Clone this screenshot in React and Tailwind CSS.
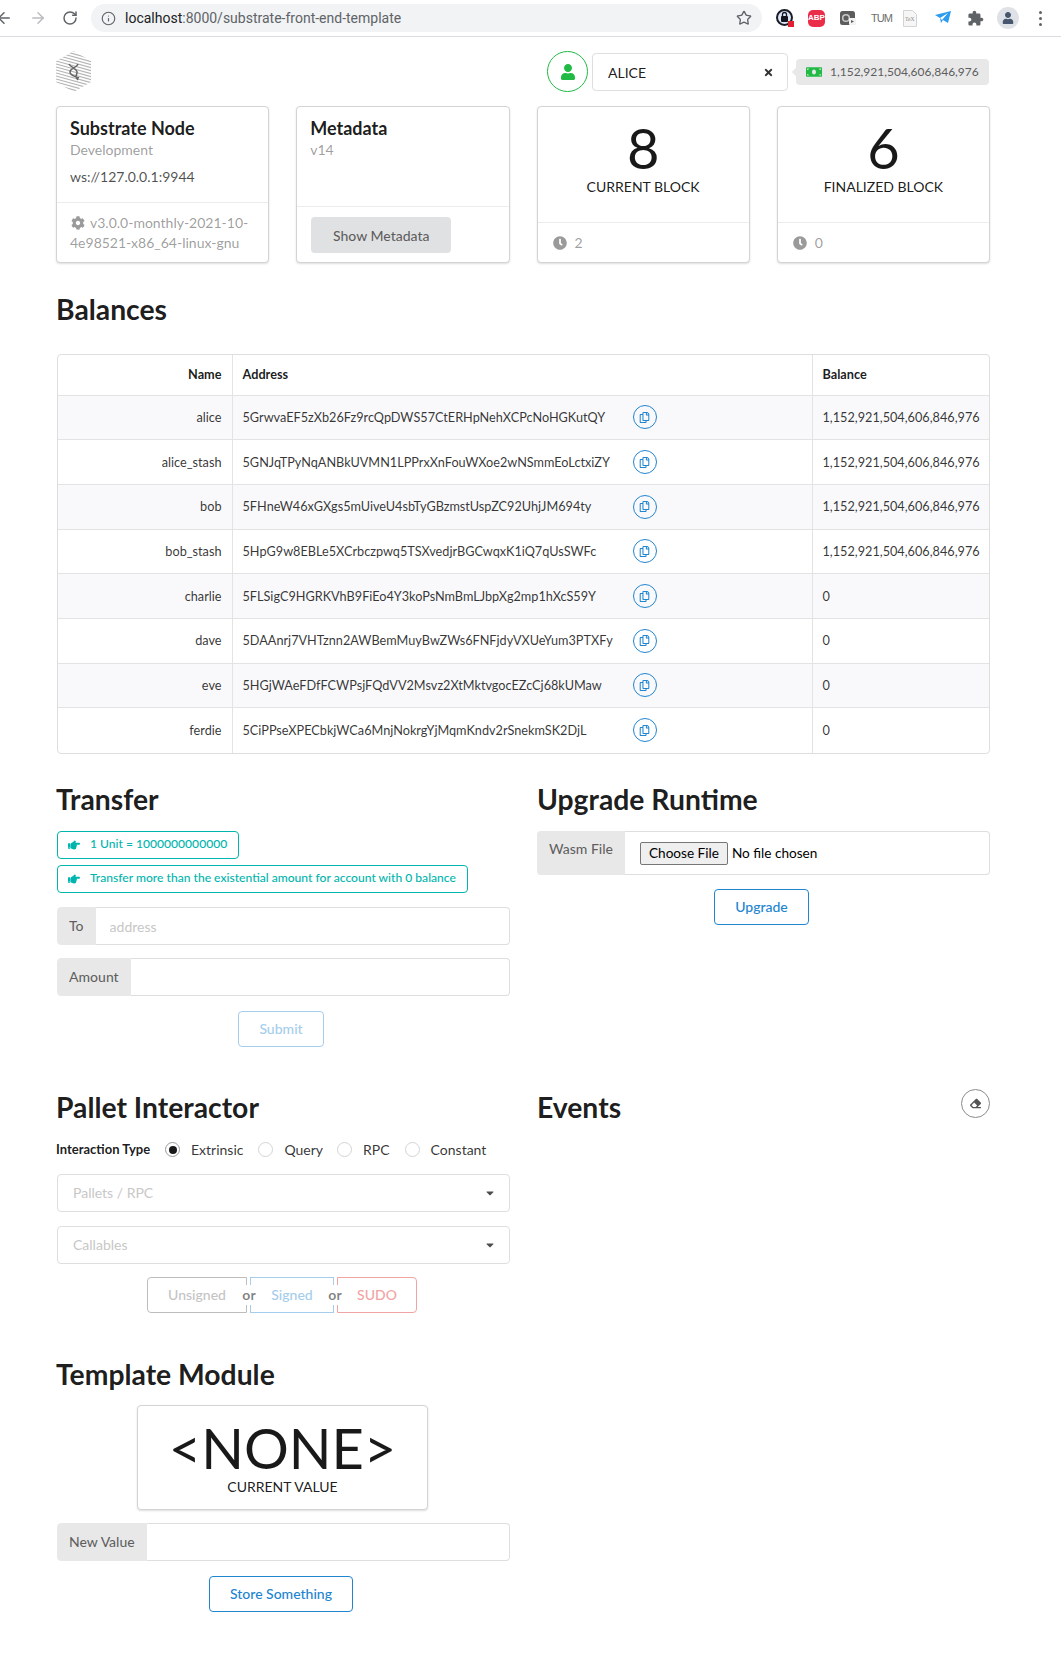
import { ArrowLeft, ArrowRight, RotateCw, Info, Star } from 'lucide-react'
import {
  FaCaretDown,
  FaClock,
  FaCog,
  FaEraser,
  FaHandPointRight,
  FaMoneyBill,
  FaRegCopy,
  FaTimes,
  FaUser,
} from 'react-icons/fa'

const accounts = [
  ['alice', '5GrwvaEF5zXb26Fz9rcQpDWS57CtERHpNehXCPcNoHGKutQY', '1,152,921,504,606,846,976'],
  ['alice_stash', '5GNJqTPyNqANBkUVMN1LPPrxXnFouWXoe2wNSmmEoLctxiZY', '1,152,921,504,606,846,976'],
  ['bob', '5FHneW46xGXgs5mUiveU4sbTyGBzmstUspZC92UhjJM694ty', '1,152,921,504,606,846,976'],
  ['bob_stash', '5HpG9w8EBLe5XCrbczpwq5TSXvedjrBGCwqxK1iQ7qUsSWFc', '1,152,921,504,606,846,976'],
  ['charlie', '5FLSigC9HGRKVhB9FiEo4Y3koPsNmBmLJbpXg2mp1hXcS59Y', '0'],
  ['dave', '5DAAnrj7VHTznn2AWBemMuyBwZWs6FNFjdyVXUeYum3PTXFy', '0'],
  ['eve', '5HGjWAeFDfFCWPsjFQdVV2Msvz2XtMktvgocEZcCj68kUMaw', '0'],
  ['ferdie', '5CiPPseXPECbkjWCa6MnjNokrgYjMqmKndv2rSnekmSK2DjL', '0'],
]

function BrowserBar() {
  return (
    <div className="h-[37px] border-b border-[#dadce0] flex items-center relative">
      <ArrowLeft size={18} strokeWidth={2} className="text-[#5f6368] ml-[-5px]" />
      <ArrowRight size={18} strokeWidth={2} className="text-[#babcbe] ml-[16px]" />
      <RotateCw size={16} strokeWidth={2.2} className="text-[#5f6368] ml-[15px]" />
      <div className="ml-[13px] w-[671px] h-[28px] bg-[#f1f3f4] rounded-full flex items-center pl-[10px] pr-[11px] text-[#5f6368]">
        <Info size={15} strokeWidth={1.8} />
        <span className="ml-[9px] text-[14px] font-['Roboto',sans-serif]">
          <span className="text-[#202124]">localhost</span>:8000/substrate-front-end-template
        </span>
        <Star size={16} strokeWidth={2} className="ml-auto mr-[-1px] text-[#5f6368]" />
      </div>
      <div className="ml-[14px] flex items-center">
        <svg width="18" height="18" viewBox="0 0 18 18">
          <circle cx="8.5" cy="8.5" r="7.5" fill="#dbe6f7" stroke="#1c1c28" strokeWidth="2" />
          <rect x="5" y="7" width="7" height="6" rx="1" fill="#15151f" />
          <path d="M6.5 7V5.5a2 2 0 0 1 4 0V7" fill="none" stroke="#15151f" strokeWidth="1.3" />
          <rect x="12" y="12" width="6" height="6" fill="#e0202f" />
        </svg>
        <div className="ml-[14px] w-[17px] h-[17px] bg-[#ea2d49] text-white text-[8px] font-bold flex items-center justify-center rounded-[5px] font-['Liberation_Sans',sans-serif]">
          ABP
        </div>
        <svg className="ml-[15px]" width="16" height="16" viewBox="0 0 16 16">
          <rect width="15" height="14" y="1" rx="2.5" fill="#5c5c5c" />
          <circle cx="6" cy="8" r="3.3" fill="none" stroke="#c9c9c9" strokeWidth="1.5" />
          <rect x="9" y="8" width="7" height="7" rx="1" fill="#f2f2f2" />
          <path d="M11 10l3 1.5-3 1.5z" fill="#5c5c5c" />
        </svg>
        <span className="ml-[15px] w-[17px] text-[11px] tracking-[-1px] text-[#6d6d6d] font-['Liberation_Sans',sans-serif]">
          TUM
        </span>
        <svg className="ml-[15px]" width="14" height="17" viewBox="0 0 14 17">
          <path d="M.5.5h9l4 4v12H.5z" fill="#f6f6f6" stroke="#d4d4d4" />
          <text x="2" y="11" fontSize="5.5" fill="#8a8a8a" fontFamily="Liberation Serif, serif">TeX</text>
        </svg>
        <svg className="ml-[18px]" width="16" height="14" viewBox="0 0 16 14">
          <path d="M0 4l16-4-3 12-5-3-2 3-1-5z" fill="#2d9cef" />
          <path d="M5 7l8-5-6 7" fill="#fff" />
        </svg>
        <svg className="ml-[16px]" width="17" height="17" viewBox="0 0 24 24" fill="#5f6368">
          <path d="M20.5 11H19V7c0-1.1-.9-2-2-2h-4V3.5C13 2.12 11.88 1 10.5 1S8 2.12 8 3.5V5H4c-1.1 0-1.99.9-1.99 2v3.8H3.5c1.49 0 2.7 1.21 2.7 2.7s-1.21 2.7-2.7 2.7H2V20c0 1.1.9 2 2 2h3.8v-1.5c0-1.49 1.21-2.7 2.7-2.7 1.49 0 2.7 1.21 2.7 2.7V22H17c1.1 0 2-.9 2-2v-4h1.5c1.38 0 2.5-1.12 2.5-2.5S21.88 11 20.5 11z" />
        </svg>
        <div className="ml-[13px] w-[22px] h-[22px] rounded-full bg-[#dee1e6] flex items-center justify-center">
          <FaUser size={12} className="text-[#47566f]" />
        </div>
        <div className="ml-[20px] flex flex-col gap-[3px]">
          <span className="w-[3px] h-[3px] rounded-full bg-[#5f6368]" />
          <span className="w-[3px] h-[3px] rounded-full bg-[#5f6368]" />
          <span className="w-[3px] h-[3px] rounded-full bg-[#5f6368]" />
        </div>
      </div>
    </div>
  )
}

function Logo() {
  const lines = []
  for (let i = 0; i < 18; i++) {
    lines.push(
      <line key={i} x1="0" y1={i * 3 - 8} x2="36" y2={i * 3 + 2} stroke="#b4b4b4" strokeWidth="1.2" />
    )
  }
  return (
    <svg width="35" height="41" viewBox="0 0 35 41">
      <defs>
        <clipPath id="hexagon">
          <polygon points="17.5,0 35,10 35,31 17.5,41 0,31 0,10" />
        </clipPath>
      </defs>
      <g clipPath="url(#hexagon)">{lines}</g>
      <path d="M13 13c2 4 9 5 8 9s-2 3 1 7M22 13c-1 4-8 4-8 8s5 4 9 6" stroke="#666" strokeWidth="1.5" fill="none" />
    </svg>
  )
}

function Card({ className = '', children }) {
  return (
    <div className={`border border-[#d4d4d5] rounded-[4px] shadow-[0_1px_2px_rgba(34,36,38,0.15)] bg-white ${className}`}>
      {children}
    </div>
  )
}

function StatCard({ value, label, since }) {
  return (
    <Card className="h-[157px] flex flex-col">
      <div className="h-[115px] flex flex-col items-center pt-[13px]">
        <div className="text-[56px] leading-[56px]">{value}</div>
        <div className="text-[14px] leading-[20px] mt-[1px] uppercase">{label}</div>
      </div>
      <div className="flex-1 border-t border-[#ececed] flex items-center px-[15px] text-[14px] text-black/40">
        <FaClock size={14} className="text-[#9a9a9a]" />
        <span className="ml-[8px]">{since}</span>
      </div>
    </Card>
  )
}

function Heading({ children }) {
  return <h1 className="text-[28.3px] leading-[36px] font-bold">{children}</h1>
}

function LabeledInput({ label, placeholder, className = 'mt-[14px]' }) {
  return (
    <div className={`flex h-[38px] ${className}`}>
      <div className="bg-[#e8e8e8] text-black/60 font-medium text-[14px] pl-[11px] pr-[11px] flex items-center rounded-l-[4px] border border-[#e8e8e8]">
        {label}
      </div>
      <input
        placeholder={placeholder}
        className="flex-1 min-w-0 border border-l-0 border-[#dedede] rounded-r-[4px] px-[14px] text-[14px] placeholder:text-[#c7c7c7] pt-[2px]"
      />
    </div>
  )
}

function Note({ children }) {
  return (
    <div className="h-[28px] w-fit border border-[#00b5ad] rounded-[4px] flex items-center pl-[10px] pr-[11px] text-[#00b5ad] text-[12.1px] font-medium">
      <FaHandPointRight size={12} />
      <span className="ml-[10px]">{children}</span>
    </div>
  )
}

function OutlineButton({ children, className = '', disabled }) {
  return (
    <button
      className={`block h-[36px] border rounded-[4px] text-[14px] font-medium ${
        disabled
          ? 'border-[#a5cdec] text-[#a5cdec]'
          : 'border-[#2185d0] text-[#2185d0]'
      } ${className}`}
    >
      {children}
    </button>
  )
}

function Radio({ label, checked, className = '' }) {
  return (
    <div className={`flex items-center ${className}`}>
      <span
        className={`w-[15px] h-[15px] rounded-full border flex items-center justify-center ${
          checked ? 'border-[#9a9a9a]' : 'border-[#d4d4d5]'
        }`}
      >
        {checked && <span className="w-[8px] h-[8px] rounded-full bg-black/90" />}
      </span>
      <span className="ml-[11px] text-[14px] text-black/80">{label}</span>
    </div>
  )
}

function SelectBox({ placeholder, className = '' }) {
  return (
    <div className={`h-[38px] border border-[#dedede] rounded-[4px] flex items-center justify-between pl-[15px] pr-[13px] ${className}`}>
      <span className="text-[14px] text-[#c7c7c7]">{placeholder}</span>
      <FaCaretDown size={12} className="text-[#4d4d4d]" />
    </div>
  )
}

function Or({ className = '' }) {
  return (
    <span className={`absolute top-[8px] h-[20px] w-[16px] bg-white text-center text-[14px] leading-[20px] font-bold text-black/50 ${className}`}>
      or
    </span>
  )
}

export default function App() {
  return (
    <div className="min-h-[1663px] bg-white text-black/90 font-['Lato',sans-serif] text-[14px]">
      <BrowserBar />
      <div className="w-[934px] ml-[56px]">
        <div className="h-[41px] mt-[14px] flex items-center">
          <Logo />
          <div className="ml-[456px] w-[41px] h-[41px] rounded-full border border-[#21ba45] flex items-center justify-center">
            <FaUser size={16} className="text-[#21ba45]" />
          </div>
          <div className="ml-[4px] mt-[1px] w-[196px] h-[38px] border border-[#dedede] rounded-[4px] flex items-center justify-between pl-[15px] pr-[13px]">
            <span className="text-[14px] text-black/90">ALICE</span>
            <FaTimes size={11} className="text-[#333]" />
          </div>
          <div className="relative ml-[8px] w-[193px] h-[26px] bg-[#e8e8e8] rounded-[4px] flex items-center pl-[10px] text-[12px] text-black/60 font-medium">
            <span className="absolute left-[-3px] top-[10px] w-[6px] h-[6px] bg-[#e8e8e8] rotate-45" />
            <FaMoneyBill size={16} className="text-[#21ba45]" />
            <span className="ml-[8px]">1,152,921,504,606,846,976</span>
          </div>
        </div>

        <div className="grid grid-cols-4 gap-[27px] mt-[14px]">
          <Card className="h-[157px] flex flex-col">
            <div className="h-[95px] px-[13px] pt-[10px]">
              <div className="text-[18px] leading-[23px] font-bold">Substrate Node</div>
              <div className="text-[14px] leading-[20px] text-black/40">Development</div>
              <div className="text-[14px] leading-[20px] mt-[7px] text-black/70">ws://127.0.0.1:9944</div>
            </div>
            <div className="flex-1 border-t border-[#ececed] px-[13px] pt-[10px] text-[14px] leading-[20px] text-black/40">
              <FaCog size={14} className="inline mr-[5px] ml-[1px] align-[-2px] text-[#9a9a9a]" />
              v3.0.0-monthly-2021-10-4e98521-x86_64-linux-gnu
            </div>
          </Card>
          <Card className="h-[157px] flex flex-col">
            <div className="h-[99px] px-[13px] pt-[10px]">
              <div className="text-[18px] leading-[23px] font-bold">Metadata</div>
              <div className="text-[14px] leading-[20px] text-black/40">v14</div>
            </div>
            <div className="flex-1 border-t border-[#ececed] px-[14px] pt-[10px]">
              <button className="w-[140px] h-[36px] bg-[#e0e1e2] rounded-[4px] text-[14px] font-medium text-black/60">
                Show Metadata
              </button>
            </div>
          </Card>
          <StatCard value="8" label="Current Block" since="2" />
          <StatCard value="6" label="Finalized Block" since="0" />
        </div>

        <div className="mt-[28px]">
          <Heading>Balances</Heading>
        </div>

        <div className="mt-[27px] ml-[1px] border border-[#dedede] rounded-[4px] overflow-hidden">
          <table className="w-full table-fixed border-collapse text-[12.7px]">
            <thead>
              <tr className="h-[40px]">
                <th className="w-[174px] text-right pr-[10px] font-bold">Name</th>
                <th className="text-left pl-[10px] border-l border-[#e3e3e3] font-bold">Address</th>
                <th className="w-[177px] text-left pl-[10px] border-l border-[#e3e3e3] font-bold">Balance</th>
              </tr>
            </thead>
            <tbody>
              {accounts.map(([name, address, balance], i) => (
                <tr key={name} className={`h-[44.7px] border-t border-[#e3e3e3] ${i % 2 === 0 ? 'bg-[#f9f9fb]' : ''}`}>
                  <td className="text-right pr-[10px] text-black/80">{name}</td>
                  <td className="pl-[10px] border-l border-[#e3e3e3] text-black/80">
                    <div className="flex items-center">
                      <span className="w-[390px] shrink-0">{address}</span>
                      <span className="w-[24px] h-[24px] rounded-full border border-[#2185d0] flex items-center justify-center text-[#2185d0]">
                        <FaRegCopy size={11} />
                      </span>
                    </div>
                  </td>
                  <td className="pl-[10px] border-l border-[#e3e3e3] text-black/80">{balance}</td>
                </tr>
              ))}
            </tbody>
          </table>
        </div>

        <div className="grid grid-cols-2 gap-x-[27px] mt-[27px] pl-[1px]">
          <div>
            <div className="ml-[-1px]">
              <Heading>Transfer</Heading>
            </div>
            <div className="mt-[14px]">
              <Note>1 Unit = 1000000000000</Note>
              <div className="mt-[6px]">
                <Note>Transfer more than the existential amount for account with 0 balance</Note>
              </div>
            </div>
            <LabeledInput label="To" placeholder="address" className="mt-[14px]" />
            <LabeledInput label="Amount" className="mt-[13px]" />
            <OutlineButton disabled className="w-[86px] ml-[181px] mt-[15px]">Submit</OutlineButton>
          </div>

          <div>
            <Heading>Upgrade Runtime</Heading>
            <div className="mt-[14px] flex h-[44px]">
              <div className="w-[88px] bg-[#e8e8e8] text-black/60 font-medium text-[14px] pl-[12px] pt-[7px] rounded-l-[4px]">
                Wasm File
              </div>
              <div className="flex-1 border border-l-0 border-[#dedede] rounded-r-[4px] flex items-center pl-[15px] pt-[1px]">
                <input
                  type="file"
                  className="text-[13.6px] text-black file:border file:border-[#767676] file:bg-[#efefef] file:rounded-[2px] file:px-[8px] file:h-[23px] file:mr-[4px]"
                />
              </div>
            </div>
            <OutlineButton className="w-[95px] ml-[177px] mt-[14px]">Upgrade</OutlineButton>
          </div>

          <div className="mt-[42px]">
            <div className="ml-[-1px]">
              <Heading>Pallet Interactor</Heading>
            </div>
            <div className="mt-[15px] ml-[-1px] h-[20px] flex items-center">
              <span className="text-[13px] font-bold w-[109px]">Interaction Type</span>
              <Radio label="Extrinsic" checked />
              <Radio label="Query" className="ml-[15px]" />
              <Radio label="RPC" className="ml-[14px]" />
              <Radio label="Constant" className="ml-[15px]" />
            </div>
            <SelectBox placeholder="Pallets / RPC" className="mt-[14px]" />
            <SelectBox placeholder="Callables" className="mt-[14px]" />
            <div className="relative h-[36px] mt-[13px] flex ml-[90px] w-[270px] text-[14px] font-medium">
              <div className="w-[100px] border border-[#bdbdbd] rounded-l-[4px] text-[#c4c4c4] text-center leading-[34px]">Unsigned</div>
              <div className="ml-[3px] w-[84px] border border-[#a5cdec] text-[#a5cdec] text-center leading-[34px]">Signed</div>
              <div className="ml-[3px] w-[80px] border border-[#f2a3a3] rounded-r-[4px] text-[#f2a3a3] text-center leading-[34px]">SUDO</div>
              <Or className="left-[94px]" />
              <Or className="left-[180px]" />
            </div>
          </div>

          <div className="mt-[42px]">
            <div className="flex items-center justify-between">
              <Heading>Events</Heading>
              <span className="w-[29px] h-[29px] rounded-full border border-[#8a8a8a] flex items-center justify-center mb-[8px]">
                <FaEraser size={11} className="text-[#555]" />
              </span>
            </div>
          </div>
        </div>

        <div className="w-[453px] mt-[43px] ml-[1px]">
          <div className="ml-[-1px]">
            <Heading>Template Module</Heading>
          </div>
          <Card className="mt-[13px] ml-[80px] w-[291px] h-[105px] flex flex-col items-center pt-[14px]">
            <div className="text-[56px] leading-[56px]">{'<NONE>'}</div>
            <div className="text-[14px] leading-[20px] mt-[1px]">CURRENT VALUE</div>
          </Card>
          <LabeledInput label="New Value" className="mt-[13px]" />
          <OutlineButton className="w-[144px] ml-[152px] mt-[15px]">Store Something</OutlineButton>
        </div>
      </div>
    </div>
  )
}
